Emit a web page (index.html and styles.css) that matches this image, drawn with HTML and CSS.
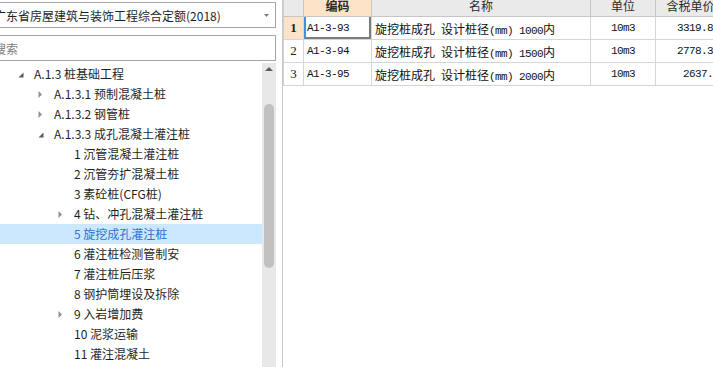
FILE: index.html
```html
<!DOCTYPE html>
<html lang="zh-CN">
<head>
    <meta charset="UTF-8">
    <meta name="viewport" content="width=device-width, initial-scale=1.0">
    <title>定额库</title>
    <link rel="stylesheet" href="styles.css">
</head>
<body>

    <div class="app">
        <div class="side">
            <div class="combo">
                <span class="combo-text">广东省房屋建筑与装饰工程综合定额(2018)</span>
                <svg class="combo-arrow" width="5" height="3" viewBox="0 0 5 3"><polygon points="0,0 5,0 2.5,3" fill="#7a7a7a"/></svg>
            </div>
            <input type="text" class="search" placeholder="搜索">

            <div class="tree">
                <div class="tree-list">
                    <div class="node lv0"><span class="tog"><svg width="16" height="20" viewBox="0 0 16 20"><polygon points="5.5,8.5 5.5,13.5 0.5,13.5" fill="#5a5a5a"/></svg></span>A.1.3 桩基础工程</div>
                    <div class="node lv1"><span class="tog"><svg width="16" height="20" viewBox="0 0 16 20"><polygon points="0.5,7 4,10.5 0.5,14" fill="#909090"/></svg></span>A.1.3.1 预制混凝土桩</div>
                    <div class="node lv1"><span class="tog"><svg width="16" height="20" viewBox="0 0 16 20"><polygon points="0.5,7 4,10.5 0.5,14" fill="#909090"/></svg></span>A.1.3.2 钢管桩</div>
                    <div class="node lv1"><span class="tog"><svg width="16" height="20" viewBox="0 0 16 20"><polygon points="5.5,8.5 5.5,13.5 0.5,13.5" fill="#5a5a5a"/></svg></span>A.1.3.3 成孔混凝土灌注桩</div>
                    <div class="node lv2"><span class="tog"></span>1 沉管混凝土灌注桩</div>
                    <div class="node lv2"><span class="tog"></span>2 沉管夯扩混凝土桩</div>
                    <div class="node lv2"><span class="tog"></span>3 素砼桩(CFG桩)</div>
                    <div class="node lv2"><span class="tog"><svg width="16" height="20" viewBox="0 0 16 20"><polygon points="0.5,7 4,10.5 0.5,14" fill="#909090"/></svg></span>4 钻、冲孔混凝土灌注桩</div>
                    <div class="node lv2 active"><span class="tog"></span>5 旋挖成孔灌注桩</div>
                    <div class="node lv2"><span class="tog"></span>6 灌注桩检测管制安</div>
                    <div class="node lv2"><span class="tog"></span>7 灌注桩后压浆</div>
                    <div class="node lv2"><span class="tog"></span>8 钢护筒埋设及拆除</div>
                    <div class="node lv2"><span class="tog"><svg width="16" height="20" viewBox="0 0 16 20"><polygon points="0.5,7 4,10.5 0.5,14" fill="#909090"/></svg></span>9 入岩增加费</div>
                    <div class="node lv2"><span class="tog"></span>10 泥浆运输</div>
                    <div class="node lv2"><span class="tog"></span>11 灌注混凝土</div>
                    <div class="node lv2"><span class="tog"></span>12 截桩头</div>
                </div>
                <div class="vscroll">
                    <svg class="up" width="8" height="4" viewBox="0 0 8 4"><polygon points="0,4 8,4 4,0" fill="#5c5c5c"/></svg>
                    <div class="thumb"></div>
                </div>
            </div>
        </div>

        <div class="main">
            <table class="grid">
                <tr>
                    <th class="c-rh"></th>
                    <th class="c-code cur">编码</th>
                    <th class="c-name">名称</th>
                    <th class="c-unit">单位</th>
                    <th class="c-price">含税单价</th>
                </tr>
                <tr>
                    <td class="rh cur">1</td>
                    <td class="m focus">A1-3-93</td>
                    <td>旋挖桩成孔<span class="m"> </span>设计桩径<span class="m">(mm) 1000</span>内</td>
                    <td class="m center">10m3</td>
                    <td class="m right">3319.85</td>
                </tr>
                <tr>
                    <td class="rh">2</td>
                    <td class="m">A1-3-94</td>
                    <td>旋挖桩成孔<span class="m"> </span>设计桩径<span class="m">(mm) 1500</span>内</td>
                    <td class="m center">10m3</td>
                    <td class="m right">2778.36</td>
                </tr>
                <tr>
                    <td class="rh">3</td>
                    <td class="m">A1-3-95</td>
                    <td>旋挖桩成孔<span class="m"> </span>设计桩径<span class="m">(mm) 2000</span>内</td>
                    <td class="m center">10m3</td>
                    <td class="m right">2637.4</td>
                </tr>
            </table>
        </div>
    </div>

</body>
</html>
```

FILE: styles.css
```css
* {
    box-sizing: border-box;
}

body {
    margin: 0;
    overflow: hidden;
    background: #fff;
    font-family: "Noto Sans CJK SC", sans-serif;
    font-size: 12px;
    color: #1f1f1f;
}

.app {
    display: flex;
    height: 367px;
}

/* left side: combo, search, tree */
.side {
    width: 285px;
    margin-left: -9px;
    flex-shrink: 0;
    display: flex;
    flex-direction: column;
}

.combo {
    margin-top: 2px;
    height: 26px;
    border: 1px solid #a6a6a6;
    display: flex;
    align-items: center;
    padding: 0 6px 0 2px;
}

.combo-text {
    flex: 1;
    white-space: nowrap;
}

.search {
    margin-top: 7px;
    height: 26px;
    width: 100%;
    border: 1px solid #a6a6a6;
    padding: 0 2px;
    font-family: "Noto Sans CJK SC", sans-serif;
    font-size: 12px;
    outline: none;
}

.search::placeholder {
    color: #7d7d7d;
}

.tree {
    margin-top: 2px;
    flex: 1;
    min-height: 0;
    display: flex;
}

.tree-list {
    flex: 1;
    overflow: hidden;
    padding-top: 1px;
}

.node {
    height: 20px;
    line-height: 20px;
    white-space: nowrap;
    display: flex;
    align-items: center;
}

.node.active {
    background: #cce8ff;
    color: #2f72d2;
}

.tog {
    width: 16px;
    height: 20px;
    flex-shrink: 0;
}

.tog svg {
    display: block;
}

.lv0 { padding-left: 27px; }
.lv1 { padding-left: 47px; }
.lv2 { padding-left: 67px; }

.vscroll {
    width: 14px;
    background: #e8e8e8;
    display: flex;
    flex-direction: column;
    align-items: center;
}

.up {
    margin-top: 4px;
    display: block;
}

.thumb {
    margin-top: 33px;
    width: 10px;
    height: 164px;
    border-radius: 5px;
    background: #c1c1c1;
}

/* right side: grid */
.main {
    flex: 1;
    margin-left: 6px;
    border-left: 1px solid #c9c9c9;
    overflow: hidden;
}

.grid {
    table-layout: fixed;
    border-collapse: separate;
    border-spacing: 0;
    width: 443px;
    border-left: 1px solid #cfcfcf;
}

.grid th {
    height: 17px;
    padding: 0;
    line-height: 12px;
    vertical-align: top;
    font-weight: normal;
    color: #2a2a2a;
    background: #eaeaea;
    border-right: 1px solid #c6c6c6;
    border-bottom: 1px solid #c6c6c6;
    white-space: nowrap;
}

.grid th.cur {
    font-weight: bold;
    background: #fde4c9;
}

.c-rh { width: 20px; }
.c-code { width: 68px; }
.c-name { width: 219px; }
.c-unit { width: 65px; }
.c-price { width: 70px; }

.grid td {
    height: 23px;
    padding: 0 3px;
    border-right: 1px solid #d6d6d6;
    border-bottom: 1px solid #d6d6d6;
    white-space: nowrap;
    overflow: hidden;
    color: #111;
}

.grid td.rh {
    padding: 0;
    text-align: center;
    font-family: "Liberation Serif", serif;
    font-size: 13px;
    color: #222;
}

.grid td.rh.cur {
    background: #fde4c9;
    font-weight: bold;
}

.m {
    font-family: "Liberation Mono", monospace;
    font-size: 11px;
    letter-spacing: -0.6px;
}

.center {
    text-align: center;
}

.grid td.right {
    text-align: right;
    padding-right: 6px;
}

.grid td.focus {
    box-shadow: inset 2px 0 0 #3d8ee8, inset -2px -2px 0 #7c7c7c;
}
```
